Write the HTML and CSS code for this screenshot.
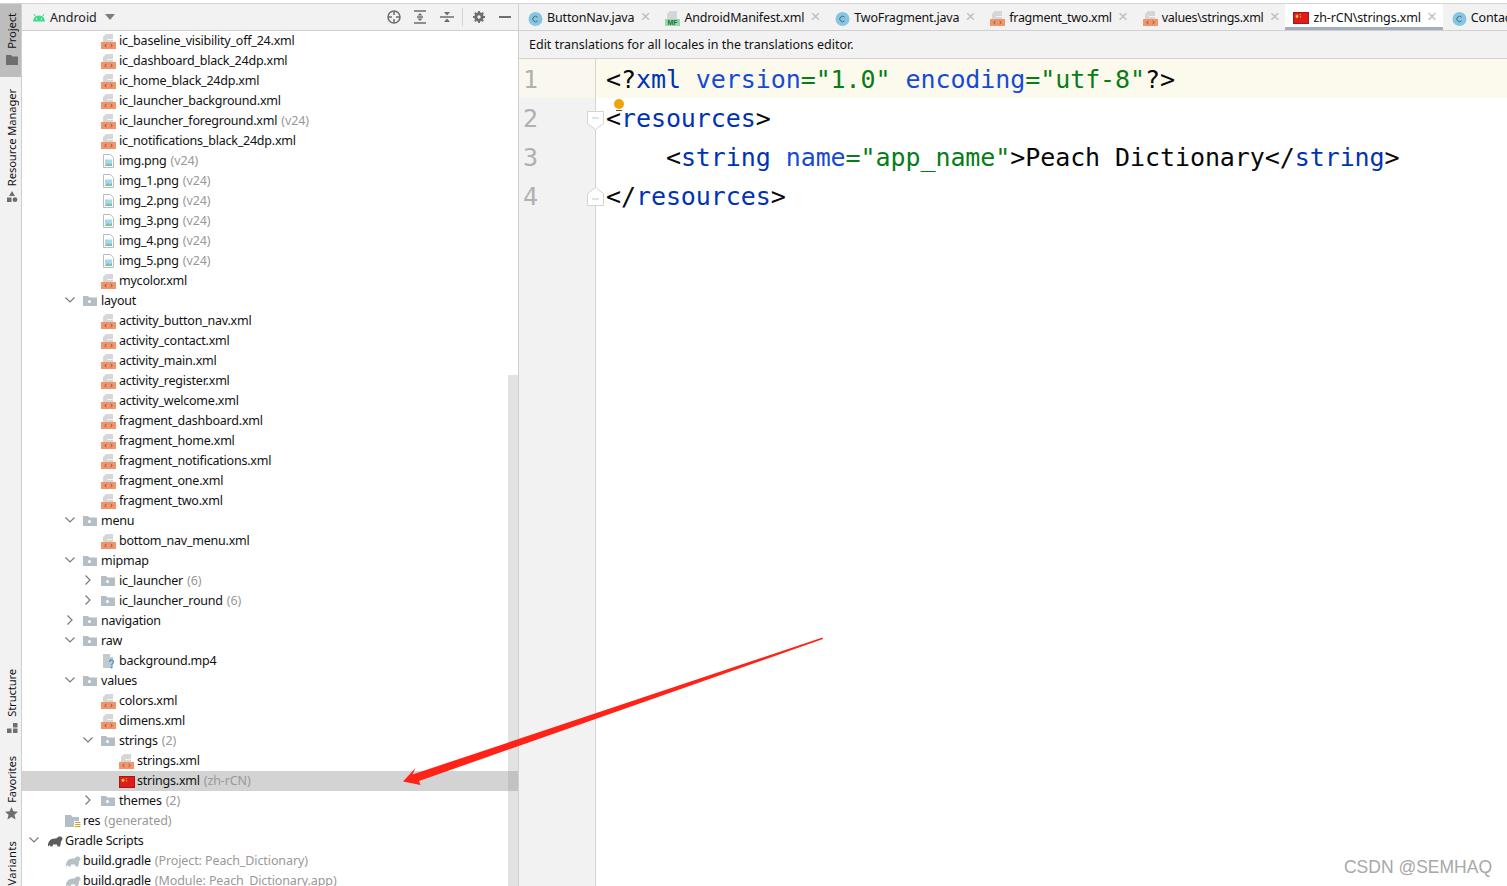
FILE: index.html
```html
<!DOCTYPE html>
<html lang="en">
<head>
<meta charset="utf-8">
<title>Android Studio</title>
<link rel="stylesheet" href="styles.css">
</head>
<body>
<svg class="defs" aria-hidden="true">
  <symbol id="i-xml" viewBox="0 0 16 16">
    <path d="M5 0h7v8H2V3z" fill="#d6d6d6"/><path d="M6 5.500h6" stroke="#fff" stroke-width=".7"/>
    <rect x="0" y="8" width="15" height="7" fill="#f2956c"/>
    <path d="M5.500 10l-1.800 1.500L5.500 13M9.500 10l1.800 1.500L9.500 13" fill="none" stroke="#6b4a3e" stroke-width=".8"/>
  </symbol>
  <symbol id="i-mf" viewBox="0 0 16 16">
    <path d="M5 0h7v8H2V3z" fill="#d6d6d6"/>
    <rect x="0" y="8" width="15" height="7" fill="#8fdcb0"/>
    <text x="7.500" y="14" font-size="7" font-family="Liberation Sans" font-weight="700" text-anchor="middle" fill="#2f6a49">MF</text>
  </symbol>
  <symbol id="i-java" viewBox="0 0 16 16">
    <circle cx="7.500" cy="8" r="7" fill="#85c7e3"/>
    <path d="M9.600 6.300a2.700 2.700 0 1 0 0 3.400" fill="none" stroke="#4e6a78" stroke-width="1"/>
  </symbol>
  <symbol id="i-flag" viewBox="0 0 16 16">
    <rect x=".5" y="2.500" width="15" height="11" fill="#e01b1b" stroke="#a81616"/>
    <path d="M4 4l.7 1.500L6 5.700l-1 1 .2 1.400L4 7.400l-1.200.7.2-1.400-1-1 1.300-.2z" fill="#ffd83a"/>
    <circle cx="7.300" cy="4.600" r=".6" fill="#ffd83a"/><circle cx="7.600" cy="6.800" r=".6" fill="#ffd83a"/>
  </symbol>
  <symbol id="i-img" viewBox="0 0 16 16">
    <path d="M2.500 .5h7l3 3v10h-10z" fill="#fff" stroke="#b9bec2"/>
    <rect x="4" y="5.500" width="7" height="6.500" fill="#a6d7ea"/><path d="M4 12l3-3 2 1.500 2-1.500v3z" fill="#7cc49a"/>
  </symbol>
  <symbol id="i-mp4" viewBox="0 0 16 16">
    <path d="M2 0h7l3 3v11H2z" fill="#c3c9cd"/><path d="M9 0l3 3H9z" fill="#fff"/>
    <path d="M8.500 8a2 2 0 1 1 3 1.700c-.8.5-1 .8-1 1.600" fill="none" stroke="#3b97d3" stroke-width="1.300"/><circle cx="10.500" cy="13.500" r=".9" fill="#3b97d3"/>
  </symbol>
  <symbol id="i-folder" viewBox="0 0 16 16">
    <path d="M0 2h5l1.500 1.500H14V12H0z" fill="#b3bec6"/><circle cx="6.500" cy="7.500" r="1.500" fill="#fff"/>
  </symbol>
  <symbol id="i-res" viewBox="0 0 16 16">
    <path d="M0 1h6l1.500 2H14v4H9v6H0z" fill="#b3bec6"/>
    <path d="M10 8.500h5.500M10 10.500h5.500M10 12.500h5.500" stroke="#d6a51f" stroke-width="1.100"/>
  </symbol>
  <symbol id="i-gradle" viewBox="0 0 16 16">
    <path d="M1 12.500C.5 8 3.500 4.500 8 4.500c1.200 0 2-.2 2.500-1 1-1.500 4-1.500 4.800.5.500 1.300 0 2.500-1.300 3 0 2-.5 4-1 5.500h-2.500l-.5-2H6l-.5 2h-2L3 11z" fill="currentColor"/>
  </symbol>
</svg>

<div class="app">
  <nav class="rail">
    <div class="rail-group">
      <div class="rail-item rail-active"><span class="rail-label">Project</span>
        <svg class="rail-ico" viewBox="0 0 12 12"><path d="M0 1h5l1.500 1.500H12V11H0z" fill="#6e6e6e"/></svg></div>
      <div class="rail-item rail-gap"><span class="rail-label">Resource Manager</span>
        <svg class="rail-ico" viewBox="0 0 12 12"><path d="M6 0l3 5H3z" fill="#6e6e6e"/><rect x="1" y="6.500" width="4.500" height="4.500" fill="#6e6e6e"/><circle cx="9" cy="8.700" r="2.400" fill="#6e6e6e"/></svg></div>
    </div>
    <div class="rail-group">
      <div class="rail-item"><span class="rail-label">Structure</span>
        <svg class="rail-ico" viewBox="0 0 12 12"><rect x="7" y="1" width="4.500" height="4.500" fill="#6e6e6e"/><rect x="1" y="6.500" width="4.500" height="4.500" fill="#6e6e6e"/><rect x="7" y="6.500" width="4.500" height="4.500" fill="#6e6e6e"/></svg></div>
      <div class="rail-item rail-fav"><span class="rail-label">Favorites</span>
        <svg class="rail-ico rail-star" viewBox="0 0 14 14"><path d="M7 0l2 4.700 5 .4-3.800 3.300 1.200 5L7 10.700 2.600 13.400l1.200-5L0 5.100l5-.4z" fill="#6e6e6e"/></svg></div>
      <div class="rail-item rail-var"><span class="rail-label">Variants</span></div>
    </div>
  </nav>

  <section class="project">
    <header class="proj-bar">
      <svg class="android" viewBox="0 0 14 9"><path d="M1 8.500a6 6 0 0 1 12 0z" fill="#3ddc84"/><path d="M3.500 3.500L2 1M10.500 3.500L12 1" stroke="#3ddc84" stroke-width="1"/><circle cx="4.500" cy="6" r=".7" fill="#fff"/><circle cx="9.500" cy="6" r=".7" fill="#fff"/></svg>
      <span class="proj-title">Android</span>
      <svg class="caret" viewBox="0 0 10 6"><path d="M0 0h10L5 6z" fill="#7d7d7d"/></svg>
      <span class="spacer"></span>
      <svg class="tool tool-first" viewBox="0 0 14 14"><circle cx="7" cy="7" r="6" fill="none" stroke="#6e6e6e" stroke-width="1.500"/><path d="M7 1v4M7 9v4M1 7h4M9 7h4" stroke="#6e6e6e" stroke-width="1.500"/></svg>
      <svg class="tool tool-two" viewBox="0 0 14 14"><path d="M1 1h12M1 13h12" stroke="#6e6e6e" stroke-width="1.500"/><path d="M4 7h6" stroke="#6e6e6e" stroke-width="1.500"/><path d="M7 3L4.500 5.500h5zM7 11L4.500 8.500h5z" fill="#6e6e6e"/></svg>
      <svg class="tool tool-three" viewBox="0 0 14 14"><path d="M0 7h14" stroke="#6e6e6e" stroke-width="1.500"/><path d="M7 5.500L4 2h6zM7 8.500L4 12h6z" fill="#6e6e6e"/></svg>
      <span class="tool-sep"></span>
      <svg class="tool tool-gear" viewBox="0 0 14 14"><circle cx="7" cy="7" r="3.200" fill="none" stroke="#6e6e6e" stroke-width="3"/><path d="M7 1v2M7 11v2M1 7h2M11 7h2M2.800 2.800l1.400 1.400M9.800 9.800l1.400 1.400M11.200 2.800L9.800 4.200M4.200 9.800l-1.400 1.400" stroke="#6e6e6e" stroke-width="2"/></svg>
      <span class="minimize"></span>
    </header>
    <div class="tree-wrap">
      <span class="scroll-thumb"></span>
      <ul class="tree">
        <li class="row l3"><svg class="ico"><use href="#i-xml"/></svg>ic_baseline_visibility_off_24.xml</li>
        <li class="row l3"><svg class="ico"><use href="#i-xml"/></svg>ic_dashboard_black_24dp.xml</li>
        <li class="row l3"><svg class="ico"><use href="#i-xml"/></svg>ic_home_black_24dp.xml</li>
        <li class="row l3"><svg class="ico"><use href="#i-xml"/></svg>ic_launcher_background.xml</li>
        <li class="row l3"><svg class="ico"><use href="#i-xml"/></svg>ic_launcher_foreground.xml<span class="dim">(v24)</span></li>
        <li class="row l3"><svg class="ico"><use href="#i-xml"/></svg>ic_notifications_black_24dp.xml</li>
        <li class="row l3"><svg class="ico"><use href="#i-img"/></svg>img.png<span class="dim">(v24)</span></li>
        <li class="row l3"><svg class="ico"><use href="#i-img"/></svg>img_1.png<span class="dim">(v24)</span></li>
        <li class="row l3"><svg class="ico"><use href="#i-img"/></svg>img_2.png<span class="dim">(v24)</span></li>
        <li class="row l3"><svg class="ico"><use href="#i-img"/></svg>img_3.png<span class="dim">(v24)</span></li>
        <li class="row l3"><svg class="ico"><use href="#i-img"/></svg>img_4.png<span class="dim">(v24)</span></li>
        <li class="row l3"><svg class="ico"><use href="#i-img"/></svg>img_5.png<span class="dim">(v24)</span></li>
        <li class="row l3"><svg class="ico"><use href="#i-xml"/></svg>mycolor.xml</li>
        <li class="row l2"><svg class="chev" viewBox="0 0 10 6"><path d="M.5.500L5 5 9.500.5"/></svg><svg class="ico"><use href="#i-folder"/></svg>layout</li>
        <li class="row l3"><svg class="ico"><use href="#i-xml"/></svg>activity_button_nav.xml</li>
        <li class="row l3"><svg class="ico"><use href="#i-xml"/></svg>activity_contact.xml</li>
        <li class="row l3"><svg class="ico"><use href="#i-xml"/></svg>activity_main.xml</li>
        <li class="row l3"><svg class="ico"><use href="#i-xml"/></svg>activity_register.xml</li>
        <li class="row l3"><svg class="ico"><use href="#i-xml"/></svg>activity_welcome.xml</li>
        <li class="row l3"><svg class="ico"><use href="#i-xml"/></svg>fragment_dashboard.xml</li>
        <li class="row l3"><svg class="ico"><use href="#i-xml"/></svg>fragment_home.xml</li>
        <li class="row l3"><svg class="ico"><use href="#i-xml"/></svg>fragment_notifications.xml</li>
        <li class="row l3"><svg class="ico"><use href="#i-xml"/></svg>fragment_one.xml</li>
        <li class="row l3"><svg class="ico"><use href="#i-xml"/></svg>fragment_two.xml</li>
        <li class="row l2"><svg class="chev" viewBox="0 0 10 6"><path d="M.5.500L5 5 9.500.5"/></svg><svg class="ico"><use href="#i-folder"/></svg>menu</li>
        <li class="row l3"><svg class="ico"><use href="#i-xml"/></svg>bottom_nav_menu.xml</li>
        <li class="row l2"><svg class="chev" viewBox="0 0 10 6"><path d="M.5.500L5 5 9.500.5"/></svg><svg class="ico"><use href="#i-folder"/></svg>mipmap</li>
        <li class="row l3"><svg class="chev chev-r" viewBox="0 0 10 6"><path d="M.5.500L5 5 9.500.5"/></svg><svg class="ico"><use href="#i-folder"/></svg>ic_launcher<span class="dim">(6)</span></li>
        <li class="row l3"><svg class="chev chev-r" viewBox="0 0 10 6"><path d="M.5.500L5 5 9.500.5"/></svg><svg class="ico"><use href="#i-folder"/></svg>ic_launcher_round<span class="dim">(6)</span></li>
        <li class="row l2"><svg class="chev chev-r" viewBox="0 0 10 6"><path d="M.5.500L5 5 9.500.5"/></svg><svg class="ico"><use href="#i-folder"/></svg>navigation</li>
        <li class="row l2"><svg class="chev" viewBox="0 0 10 6"><path d="M.5.500L5 5 9.500.5"/></svg><svg class="ico"><use href="#i-folder"/></svg>raw</li>
        <li class="row l3"><svg class="ico"><use href="#i-mp4"/></svg>background.mp4</li>
        <li class="row l2"><svg class="chev" viewBox="0 0 10 6"><path d="M.5.500L5 5 9.500.5"/></svg><svg class="ico"><use href="#i-folder"/></svg>values</li>
        <li class="row l3"><svg class="ico"><use href="#i-xml"/></svg>colors.xml</li>
        <li class="row l3"><svg class="ico"><use href="#i-xml"/></svg>dimens.xml</li>
        <li class="row l3"><svg class="chev" viewBox="0 0 10 6"><path d="M.5.500L5 5 9.500.5"/></svg><svg class="ico"><use href="#i-folder"/></svg>strings<span class="dim">(2)</span></li>
        <li class="row l4"><svg class="ico"><use href="#i-xml"/></svg>strings.xml</li>
        <li class="row l4 row-sel"><svg class="ico"><use href="#i-flag"/></svg>strings.xml<span class="dim">(zh-rCN)</span></li>
        <li class="row l3"><svg class="chev chev-r" viewBox="0 0 10 6"><path d="M.5.500L5 5 9.500.5"/></svg><svg class="ico"><use href="#i-folder"/></svg>themes<span class="dim">(2)</span></li>
        <li class="row l1"><svg class="ico"><use href="#i-res"/></svg>res<span class="dim">(generated)</span></li>
        <li class="row l0"><svg class="chev" viewBox="0 0 10 6"><path d="M.5.500L5 5 9.500.5"/></svg><svg class="ico gradle-dark"><use href="#i-gradle"/></svg>Gradle Scripts</li>
        <li class="row l1"><svg class="ico gradle-light"><use href="#i-gradle"/></svg>build.gradle<span class="dim">(Project: Peach_Dictionary)</span></li>
        <li class="row l1"><svg class="ico gradle-light"><use href="#i-gradle"/></svg>build.gradle<span class="dim">(Module: Peach_Dictionary.app)</span></li>
      </ul>
    </div>
  </section>

  <main class="editor">
    <div class="tabs">
      <div class="tab"><svg class="ico"><use href="#i-java"/></svg><span class="tab-name">ButtonNav.java</span><span class="tab-x">×</span></div>
      <div class="tab"><svg class="ico"><use href="#i-mf"/></svg><span class="tab-name">AndroidManifest.xml</span><span class="tab-x">×</span></div>
      <div class="tab tab-snug"><svg class="ico"><use href="#i-java"/></svg><span class="tab-name">TwoFragment.java</span><span class="tab-x">×</span></div>
      <div class="tab tab-narrow"><svg class="ico"><use href="#i-xml"/></svg><span class="tab-name">fragment_two.xml</span><span class="tab-x">×</span></div>
      <div class="tab tab-narrow"><svg class="ico"><use href="#i-xml"/></svg><span class="tab-name">values\strings.xml</span><span class="tab-x">×</span></div>
      <div class="tab tab-active"><svg class="ico"><use href="#i-flag"/></svg><span class="tab-name">zh-rCN\strings.xml</span><span class="tab-x">×</span></div>
      <div class="tab"><svg class="ico"><use href="#i-java"/></svg><span class="tab-name">ContactActivity.java</span></div>
    </div>
    <div class="banner">Edit translations for all locales in the translations editor.</div>
    <div class="code">
      <div class="line line-cur"><span class="num">1</span><pre class="src"><span class="p">&lt;?</span><span class="t">xml</span> <span class="a">version</span><span class="s">="1.0"</span> <span class="a">encoding</span><span class="s">="utf-8"</span><span class="p">?&gt;</span></pre></div>
      <div class="line"><span class="num">2</span><pre class="src"><span class="p">&lt;</span><span class="t">resources</span><span class="p">&gt;</span></pre>
        <svg class="fold" viewBox="0 0 17 20"><path d="M.5.500h16v12l-8 6-8-6z" fill="#fff" stroke="#d4d4d4"/><path d="M5 7h7" stroke="#c4c4c4"/></svg>
        <span class="bulb"></span>
      </div>
      <div class="line"><span class="num">3</span><pre class="src">    <span class="p">&lt;</span><span class="t">string</span> <span class="a">name</span><span class="s">="app_name"</span><span class="p">&gt;Peach Dictionary&lt;/</span><span class="t">string</span><span class="p">&gt;</span></pre></div>
      <div class="line"><span class="num">4</span><pre class="src"><span class="p">&lt;/</span><span class="t">resources</span><span class="p">&gt;</span></pre>
        <svg class="fold fold-end" viewBox="0 0 17 20"><path d="M.5 19.500h16v-12l-8-6-8 6z" fill="#fff" stroke="#d4d4d4"/><path d="M5 13h7" stroke="#c4c4c4"/></svg>
      </div>
      <div class="gutter-fill"></div>
    </div>
  </main>
</div>

<svg class="annotation" viewBox="0 0 1507 886" aria-hidden="true">
  <path d="M822.500 637.500L823 639 419 781 420.500 785 403 781.500 415.500 768 412.500 774.500z" fill="#ff2217"/>
</svg>
<div class="watermark">CSDN @SEMHAQ</div>
</body>
</html>
```
FILE: styles.css
```css
* { box-sizing: border-box; }
html, body { margin: 0; height: 100%; overflow: hidden; background: #fff; }
body { font-family: "Noto Sans", "Noto Sans CJK SC", sans-serif; font-size: 12.5px; color: #111; }
.defs { position: absolute; width: 0; height: 0; }

.app { display: flex; height: 883px; margin-top: 3px; border-top: 1px solid #d4d4d4; }

/* left tool rail */
.rail { flex: 0 0 22px; display: flex; flex-direction: column; justify-content: space-between; background: #f2f2f2; border-right: 1px solid #cfcfcf; overflow: hidden; }
.rail-group { display: flex; flex-direction: column; }
.rail-item { display: flex; flex-direction: column; align-items: center; width: 21px; padding-left: 2px; }
.rail-active { height: 73px; padding-top: 9px; background: #bdbdbd; }
.rail-gap { margin-top: 12px; }
.rail-label { writing-mode: vertical-rl; transform: rotate(180deg); font-size: 11.2px; line-height: 16px; letter-spacing: -.1px; white-space: nowrap; color: #111; }
.rail-ico { width: 12px; height: 12px; margin-top: 5px; flex: none; }
.rail-star { width: 13px; height: 13px; margin-top: 4px; }
.rail-fav { margin-top: 22px; }
.rail-var { margin-top: 21px; margin-bottom: 1px; }
.rail-var .rail-label { letter-spacing: .2px; }

/* project panel */
.project { flex: 0 0 497px; display: flex; flex-direction: column; border-right: 1px solid #cfcfcf; min-width: 0; }
.proj-bar { flex: 0 0 27px; display: flex; align-items: center; background: #f2f2f2; border-bottom: 1px solid #d0d0d0; padding: 0 7px 0 10px; }
.android { width: 14px; height: 9px; flex: none; }
.proj-title { margin-left: 4px; color: #222; }
.caret { width: 10px; height: 6px; margin-left: 8px; flex: none; }
.spacer { flex: 1; }
.tool { width: 14px; height: 14px; flex: none; }
.tool-two { margin-left: 12px; }
.tool-three { margin-left: 13px; }
.tool-sep { width: 1px; height: 18px; margin: 0 9px 0 8px; background: #d4d4d4; }
.minimize { width: 12px; height: 2px; margin-left: 13px; background: #6e6e6e; }

.tree-wrap { position: relative; flex: 1; overflow: hidden; }
.scroll-thumb { position: absolute; right: 0; top: 344px; bottom: 0; width: 10px; background: #e2e2e2; }
.tree { list-style: none; margin: 0; padding: 0; position: relative; }
.row { display: flex; align-items: center; height: 20px; padding-bottom: 2px; white-space: nowrap; color: #111; letter-spacing: -.22px; }
.l0 { padding-left: 7px; }
.l1 { padding-left: 43px; }
.l2 { padding-left: 43px; }
.l3 { padding-left: 79px; }
.l4 { padding-left: 97px; }
.l3 > .chev { margin-left: -18px; }
.row-sel { background: rgba(150, 150, 150, .42); }
.dim { margin-left: 4px; color: #999; letter-spacing: -.1px; }
.ico { width: 16px; height: 16px; margin: 4px 2px 0 0; flex: none; display: block; }
.chev { width: 10px; height: 6px; margin: 0 8px 0 0; flex: none; overflow: visible; }
.chev path { fill: none; stroke: #7a7a7a; stroke-width: 1.200; }
.chev-r { transform: rotate(-90deg); }
.gradle-dark { color: #5c5c5c; }
.gradle-light { color: #b6c0c7; }

/* editor */
.editor { flex: 1; min-width: 0; display: flex; flex-direction: column; overflow: hidden; }
.tabs { flex: 0 0 27px; display: flex; background: #f2f2f2; border-bottom: 1px solid #d0d0d0; overflow: hidden; }
.tab { display: flex; align-items: center; flex: none; height: 26px; padding: 0 6px 0 9px; white-space: nowrap; letter-spacing: -.15px; }
.tab-snug { letter-spacing: -.2px; }
.tab-narrow { letter-spacing: -.3px; }
.tab .ico { margin-right: 3px; }
.tab-name { color: #111; }
.tab-x { width: 10px; margin-left: 6px; font-size: 17px; line-height: 14px; color: #bdbdbd; font-family: "Liberation Sans", sans-serif; text-align: center; }
.tab-active { background: #fff; box-shadow: inset 0 -3px 0 #a4adbd; padding-left: 8px; }
.tab-active .ico { margin-top: 1px; margin-right: 4px; }
.banner { flex: 0 0 28px; display: flex; align-items: center; padding: 0 0 1px 10px; background: #f2f2f2; border-bottom: 1px solid #d0d0d0; color: #111; }

.code { flex: 1; min-height: 0; display: flex; flex-direction: column; font-family: "DejaVu Sans Mono", monospace; font-size: 25px; letter-spacing: -.08px; }
.line { position: relative; display: flex; flex: 0 0 39px; min-height: 0; height: 39px; align-items: center; }
.line-cur { background: #fcfaed; }
.line-cur .num { background: #faf8ee; }
.num { flex: 0 0 77px; height: 39px; line-height: 41px; padding-left: 4px; background: #f2f2f2; border-right: 1px solid #d4d4d4; color: #b0b0b0; }
.src { margin: 0 0 0 10px; font: inherit; height: 39px; line-height: 41px; white-space: pre; }
.gutter-fill { flex: 1; width: 77px; background: #f2f2f2; border-right: 1px solid #d4d4d4; }
.p { color: #080808; }
.t { color: #0033b3; }
.a { color: #174ad4; }
.s { color: #067d17; }
.fold { position: absolute; left: 68px; top: 13px; width: 17px; height: 20px; }
.fold-end { top: 10px; }
.bulb { position: absolute; left: 95px; top: 1px; width: 10px; height: 10px; border-radius: 50%; background: #f0a30a; }
.bulb::after { content: ""; position: absolute; left: 2px; top: 11px; width: 6px; height: 1px; background: #555; }

/* overlays */
.annotation { position: absolute; left: 0; top: 0; width: 1507px; height: 886px; pointer-events: none; }
.watermark { position: absolute; right: 15px; bottom: 8px; font-family: "Liberation Sans", sans-serif; font-size: 17.5px; line-height: 22px; color: #a8a8a8; }
```
